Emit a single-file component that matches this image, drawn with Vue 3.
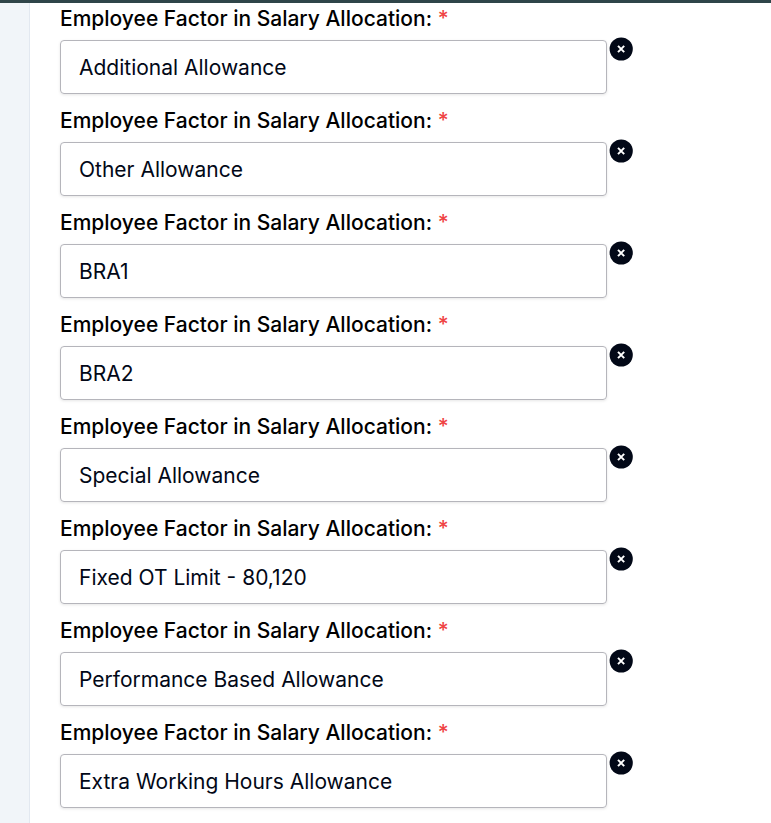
<script setup>
const fields = [
  'Additional Allowance',
  'Other Allowance',
  'BRA1',
  'BRA2',
  'Special Allowance',
  'Fixed OT Limit - 80,120',
  'Performance Based Allowance',
  'Extra Working Hours Allowance',
]
</script>

<template>
  <div class="page">
    <aside class="gutter"></aside>
    <main class="form">
      <div v-for="name in fields" :key="name" class="group">
        <label class="label">Employee Factor in Salary Allocation: <span class="req">*</span></label>
        <div class="row">
          <div class="control">{{ name }}</div>
          <button class="remove" type="button" aria-label="Remove">
            <svg viewBox="0 0 24 24" width="24" height="24">
              <circle cx="12.2" cy="12" r="11.6" fill="#020817" />
              <path d="M9 8.9L15.2 15.1M15.2 8.9L9 15.1" stroke="#fff" stroke-width="2" />
            </svg>
          </button>
        </div>
      </div>
    </main>
  </div>
</template>

<style>
body {
  background: #fff;
  overflow: hidden;
}
</style>

<style scoped>
.page {
  box-sizing: border-box;
  height: 823px;
  display: flex;
  overflow: hidden;
  border-top: 3px solid #2f4549;
  font-family: Inter, sans-serif;
  color: #020817;
}
.gutter {
  box-sizing: border-box;
  width: 30px;
  flex: none;
  background: #f1f5f9;
  border-right: 1px solid #e2e8f0;
}
.form {
  padding-left: 30px;
}
.group {
  height: 102px;
}
.label {
  display: block;
  height: 37px;
  line-height: 32px;
  font-size: 21px;
  font-weight: 500;
  white-space: nowrap;
  color: #000;
}
.req {
  color: #ef4444;
}
.row {
  display: flex;
  align-items: flex-start;
  gap: 2px;
}
.control {
  box-sizing: border-box;
  width: 547px;
  height: 54px;
  padding: 0 18px;
  border: 1px solid #b5b5bb;
  border-radius: 4px;
  box-shadow: 0 1px 3px rgba(0, 0, 0, 0.1);
  font-size: 21px;
  line-height: 53px;
}
.remove {
  padding: 0;
  margin-top: -3px;
  border: 0;
  background: none;
  display: flex;
}
</style>
